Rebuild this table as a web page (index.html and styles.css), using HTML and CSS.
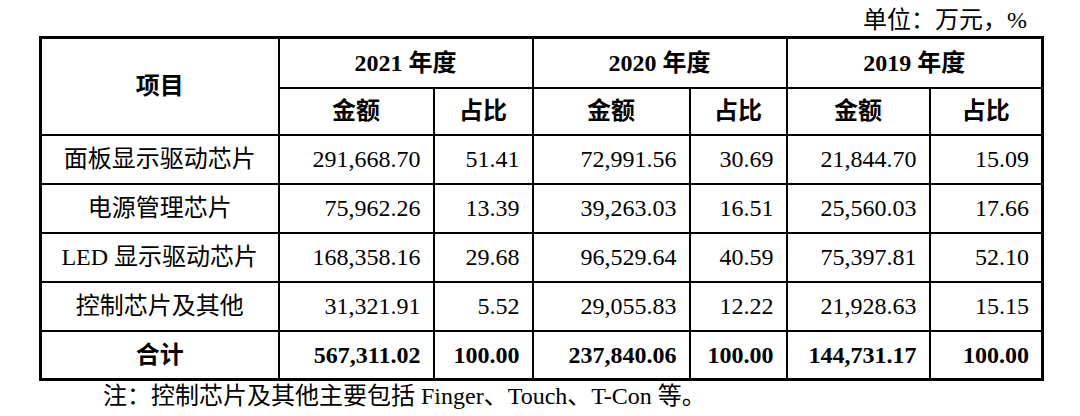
FILE: index.html
```html
<!DOCTYPE html>
<html lang="zh-CN">
<head>
<meta charset="utf-8">
<title>主营业务收入构成</title>
<link rel="stylesheet" href="styles.css">
</head>
<body>
<div class="page">
  <div class="unit">单位：万元，%</div>
  <table class="data">
    <colgroup>
      <col class="c-item">
      <col class="c-a21"><col class="c-p21">
      <col class="c-a20"><col class="c-p20">
      <col class="c-a19"><col class="c-p19">
    </colgroup>
    <thead>
      <tr class="hr1">
        <th rowspan="2">项目</th>
        <th colspan="2">2021 年度</th>
        <th colspan="2">2020 年度</th>
        <th colspan="2">2019 年度</th>
      </tr>
      <tr class="hr2">
        <th>金额</th><th>占比</th>
        <th>金额</th><th>占比</th>
        <th>金额</th><th>占比</th>
      </tr>
    </thead>
    <tbody>
      <tr>
        <td class="name">面板显示驱动芯片</td>
        <td class="num">291,668.70</td><td class="num">51.41</td>
        <td class="num">72,991.56</td><td class="num">30.69</td>
        <td class="num">21,844.70</td><td class="num">15.09</td>
      </tr>
      <tr>
        <td class="name">电源管理芯片</td>
        <td class="num">75,962.26</td><td class="num">13.39</td>
        <td class="num">39,263.03</td><td class="num">16.51</td>
        <td class="num">25,560.03</td><td class="num">17.66</td>
      </tr>
      <tr>
        <td class="name">LED 显示驱动芯片</td>
        <td class="num">168,358.16</td><td class="num">29.68</td>
        <td class="num">96,529.64</td><td class="num">40.59</td>
        <td class="num">75,397.81</td><td class="num">52.10</td>
      </tr>
      <tr>
        <td class="name">控制芯片及其他</td>
        <td class="num">31,321.91</td><td class="num">5.52</td>
        <td class="num">29,055.83</td><td class="num">12.22</td>
        <td class="num">21,928.63</td><td class="num">15.15</td>
      </tr>
      <tr class="total">
        <td class="name">合计</td>
        <td class="num">567,311.02</td><td class="num">100.00</td>
        <td class="num">237,840.06</td><td class="num">100.00</td>
        <td class="num">144,731.17</td><td class="num">100.00</td>
      </tr>
    </tbody>
  </table>
  <p class="note">注：控制芯片及其他主要包括 Finger、Touch、T-Con 等。</p>
</div>
</body>
</html>
```

FILE: styles.css
```css
html, body {
  margin: 0;
  padding: 0;
  background: #ffffff;
}

body {
  font-family: "Liberation Serif", "Noto Sans CJK SC", serif;
  font-size: 24px;
  color: #000000;
}

.page {
  width: 1002px;
  margin-left: 39px;
}

.unit {
  box-sizing: border-box;
  height: 36px;
  padding-top: 5px;
  padding-right: 14px;
  line-height: 30px;
  text-align: right;
}

.data {
  width: 1002px;
  table-layout: fixed;
  border-collapse: collapse;
  border: 3px solid #000000;
}

.c-item { width: 238px; }
.c-a21 { width: 155px; }
.c-p21 { width: 99px; }
.c-a20 { width: 157px; }
.c-p20 { width: 97px; }
.c-a19 { width: 143px; }
.c-p19 { width: 113px; }

.data th,
.data td {
  border: 2px solid #000000;
  padding: 0 12px;
  line-height: 28px;
  white-space: nowrap;
}

.data th {
  font-weight: 700;
  text-align: center;
}

.hr1 { height: 50px; }
.hr2 { height: 47px; }

.data tbody tr { height: 49px; }

.data td.name {
  text-align: center;
}

.data td.num {
  text-align: right;
}

.total td {
  font-weight: 700;
}

.note {
  margin: 0;
  padding-left: 64px;
  line-height: 30px;
}
```
